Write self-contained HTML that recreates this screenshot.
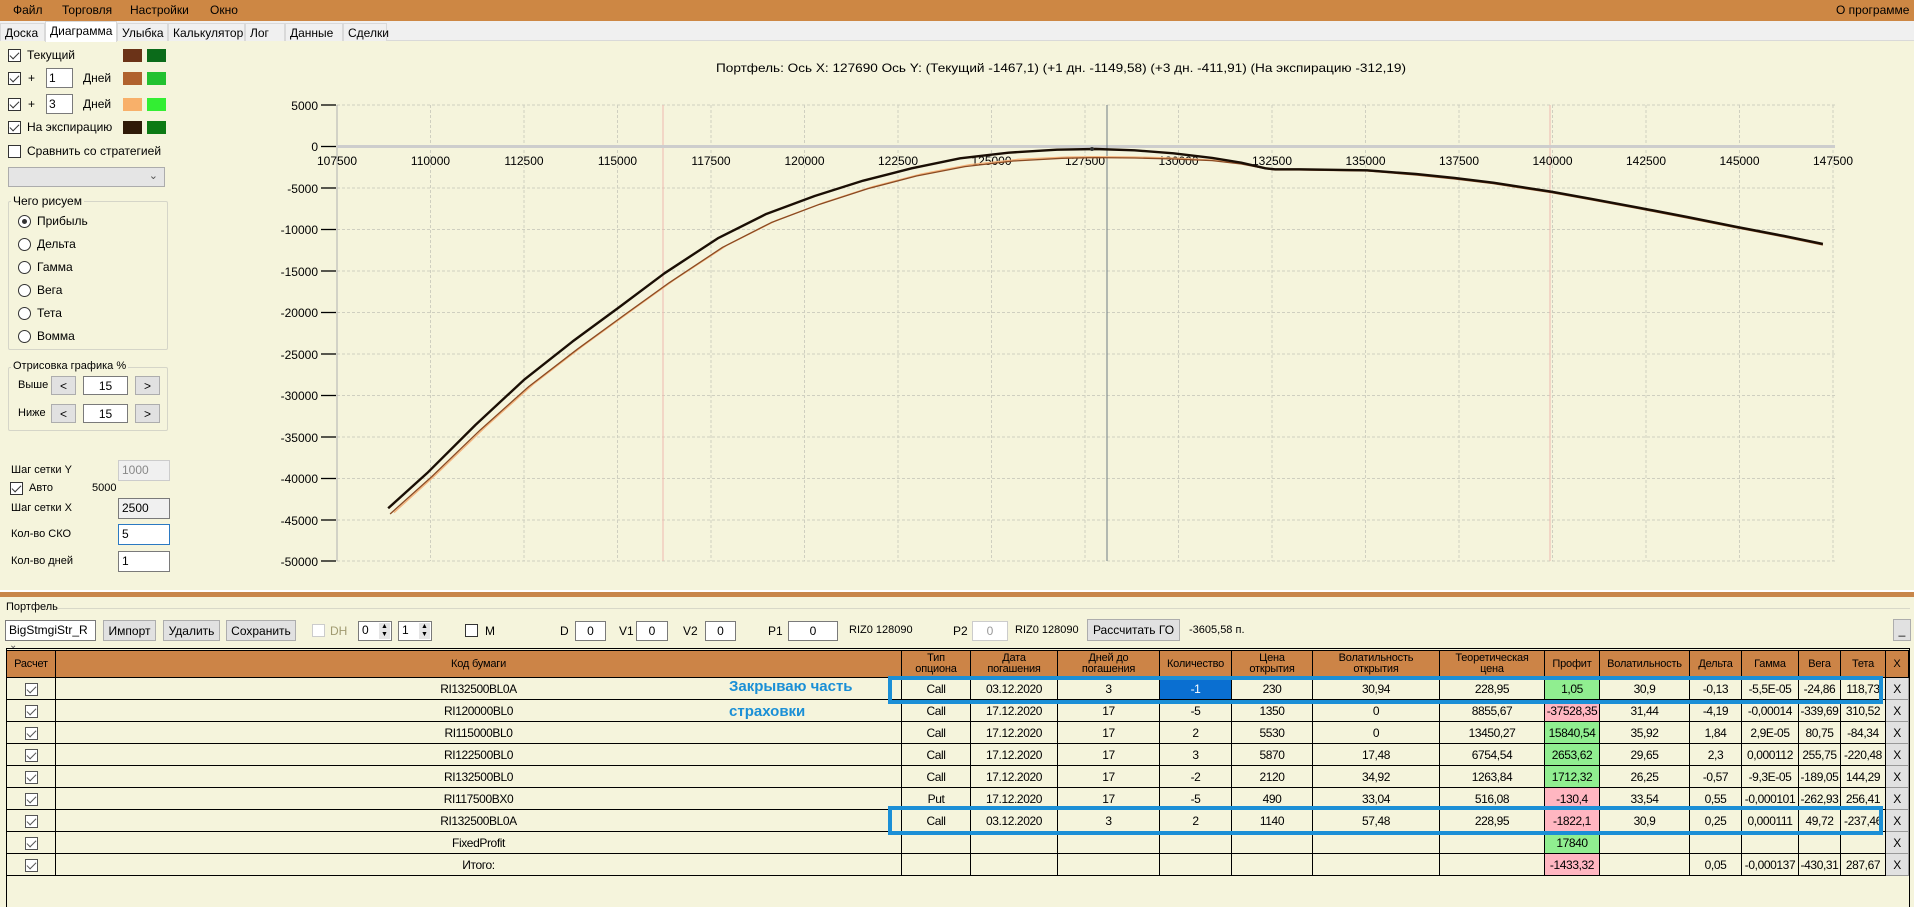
<!DOCTYPE html>
<html><head><meta charset="utf-8"><style>
*{box-sizing:border-box;margin:0;padding:0}
body{width:1914px;height:907px;overflow:hidden;background:#f5f4dc;font-family:"Liberation Sans",sans-serif;font-size:12px;color:#000;position:relative}
.a{position:absolute;white-space:nowrap}
.menu{left:0;top:0;width:1914px;height:21px;background:#cd8744}
.menu span{position:absolute;top:3px;font-size:12px}
.tabs{left:0;top:21px;width:1914px;height:20px;background:#f0f0f0;border-bottom:1px solid #d9d9d9}
.tab{position:absolute;top:2px;height:18px;border:1px solid #d9d9d9;border-bottom:none;font-size:12px;padding:2px 0 0 4px;background:#f0f0f0}
.cb{position:absolute;width:13px;height:13px;border:1px solid #333;background:#fff}
.cb.on::after{content:"";position:absolute;left:3px;top:0px;width:4px;height:8px;border:solid #333;border-width:0 1px 1px 0;transform:rotate(45deg)}
.sw{position:absolute;width:19px;height:13px}
.inp{position:absolute;background:#fff;border:1px solid #7a7a7a;font-size:12px;padding:2px 3px}
.rd{position:absolute;width:13px;height:13px;border:1px solid #333;border-radius:50%;background:#fff}
.gb{position:absolute;border:1px solid #d5d5c8;border-radius:2px}
.btn{position:absolute;background:#e1e1e1;border:1px solid #adadad;font-size:12px;text-align:center;padding-top:3px}
.nar{font-family:"Liberation Sans Narrow","Liberation Sans",sans-serif;font-stretch:condensed}
table{position:absolute;left:6px;top:650px;border-collapse:collapse;table-layout:fixed;font-family:"Liberation Sans Narrow","Liberation Sans",sans-serif;font-stretch:condensed;font-size:12px}
td,th{border:1px solid #000;text-align:center;height:22px;padding:0;overflow:hidden;white-space:nowrap;letter-spacing:-0.4px}
th{background:#cc8447;font-weight:normal;height:27px;line-height:11px;font-size:11px;letter-spacing:-0.2px}
.g{background:#90ee90}.p{background:#ffb6c1}
.x{background:#e1e1e1;border:1px solid #999}
.tc{display:inline-block;width:13px;height:13px;border:1px solid #555;position:relative;vertical-align:middle;background:#fff}
.tc::after{content:"";position:absolute;left:3px;top:0;width:4px;height:8px;border:solid #555;border-width:0 1px 1px 0;transform:rotate(45deg)}
.hl{position:absolute;border:4px solid #1b8fd6}
</style></head><body>
<div class="a menu"><span style="left:13px">Файл</span><span style="left:62px">Торговля</span><span style="left:130px">Настройки</span><span style="left:210px">Окно</span><span style="left:1836px">О программе</span></div>
<div class="a tabs">
<div class="tab" style="left:0;width:45px">Доска</div>
<div class="tab" style="left:45px;width:72px;top:0;height:21px;background:#fff">Диаграмма</div>
<div class="tab" style="left:117px;width:51px">Улыбка</div>
<div class="tab" style="left:168px;width:77px">Калькулятор</div>
<div class="tab" style="left:245px;width:40px">Лог</div>
<div class="tab" style="left:285px;width:58px">Данные</div>
<div class="tab" style="left:343px;width:44px">Сделки</div>
</div>
<!-- left panel -->
<div class="cb on" style="left:8px;top:49px"></div><div class="a" style="left:27px;top:48px">Текущий</div>
<div class="sw" style="left:123px;top:49px;background:#6b3318"></div><div class="sw" style="left:147px;top:49px;background:#0b6b1a"></div>
<div class="cb on" style="left:8px;top:72px"></div><div class="a" style="left:28px;top:71px">+</div>
<div class="inp" style="left:46px;top:68px;width:27px;height:20px;padding:2px">1</div><div class="a" style="left:83px;top:71px">Дней</div>
<div class="sw" style="left:123px;top:72px;background:#b0622e"></div><div class="sw" style="left:147px;top:72px;background:#22c130"></div>
<div class="cb on" style="left:8px;top:98px"></div><div class="a" style="left:28px;top:97px">+</div>
<div class="inp" style="left:46px;top:94px;width:27px;height:20px;padding:2px">3</div><div class="a" style="left:83px;top:97px">Дней</div>
<div class="sw" style="left:123px;top:98px;background:#f8b06a"></div><div class="sw" style="left:147px;top:98px;background:#33ee33"></div>
<div class="cb on" style="left:8px;top:121px"></div><div class="a" style="left:27px;top:120px">На экспирацию</div>
<div class="sw" style="left:123px;top:121px;background:#2f1a08"></div><div class="sw" style="left:147px;top:121px;background:#0c7a14"></div>
<div class="cb" style="left:8px;top:145px"></div><div class="a" style="left:27px;top:144px">Сравнить со стратегией</div>
<div class="a" style="left:8px;top:167px;width:157px;height:20px;background:#e5e5e5;border:1px solid #acacac"><span style="position:absolute;right:6px;top:1px;font-size:11px;color:#555">&#8964;</span></div>
<div class="gb" style="left:8px;top:201px;width:160px;height:149px"></div>
<div class="a" style="left:11px;top:194px;background:#f5f4dc;padding:0 2px">Чего рисуем</div>
<div class="rd" style="left:18px;top:215px"><div style="position:absolute;left:3px;top:3px;width:5px;height:5px;border-radius:50%;background:#333"></div></div><div class="a" style="left:37px;top:214px">Прибыль</div>
<div class="rd" style="left:18px;top:238px"></div><div class="a" style="left:37px;top:237px">Дельта</div>
<div class="rd" style="left:18px;top:261px"></div><div class="a" style="left:37px;top:260px">Гамма</div>
<div class="rd" style="left:18px;top:284px"></div><div class="a" style="left:37px;top:283px">Вега</div>
<div class="rd" style="left:18px;top:307px"></div><div class="a" style="left:37px;top:306px">Тета</div>
<div class="rd" style="left:18px;top:330px"></div><div class="a" style="left:37px;top:329px">Вомма</div>
<div class="gb" style="left:8px;top:367px;width:160px;height:64px"></div>
<div class="a nar" style="left:11px;top:360px;background:#f5f4dc;padding:0 2px;font-size:11px">Отрисовка графика %</div>
<div class="a nar" style="left:18px;top:379px;font-size:11px">Выше</div>
<div class="btn" style="left:51px;top:376px;width:25px;height:19px;padding-top:2px">&lt;</div>
<div class="inp" style="left:83px;top:376px;width:45px;height:19px;text-align:center;padding:2px">15</div>
<div class="btn" style="left:135px;top:376px;width:25px;height:19px;padding-top:2px">&gt;</div>
<div class="a nar" style="left:18px;top:407px;font-size:11px">Ниже</div>
<div class="btn" style="left:51px;top:404px;width:25px;height:19px;padding-top:2px">&lt;</div>
<div class="inp" style="left:83px;top:404px;width:45px;height:19px;text-align:center;padding:2px">15</div>
<div class="btn" style="left:135px;top:404px;width:25px;height:19px;padding-top:2px">&gt;</div>
<div class="a nar" style="left:11px;top:464px;font-size:11px">Шаг сетки Y</div>
<div class="inp nar" style="left:118px;top:460px;width:52px;height:21px;background:#f0f0f0;border-color:#ccc;color:#888">1000</div>
<div class="cb on" style="left:10px;top:482px"></div><div class="a nar" style="left:29px;top:482px;font-size:11px">Авто</div><div class="a nar" style="left:92px;top:482px;font-size:11px">5000</div>
<div class="a nar" style="left:11px;top:502px;font-size:11px">Шаг сетки X</div>
<div class="inp nar" style="left:118px;top:498px;width:52px;height:21px;background:#f0f0f0">2500</div>
<div class="a nar" style="left:11px;top:528px;font-size:11px">Кол-во СКО</div>
<div class="inp nar" style="left:118px;top:524px;width:52px;height:21px;border-color:#2b79c2">5</div>
<div class="a nar" style="left:11px;top:555px;font-size:11px">Кол-во дней</div>
<div class="inp nar" style="left:118px;top:551px;width:52px;height:21px">1</div>
<!-- chart -->
<svg class="a" style="left:0;top:0" width="1914" height="600" viewBox="0 0 1914 600">
<text x="716" y="72" font-family="Liberation Sans" font-size="12" textLength="690" lengthAdjust="spacingAndGlyphs">Портфель: Ось X: 127690 Ось Y:  (Текущий -1467,1)  (+1 дн. -1149,58)  (+3 дн. -411,91)  (На экспирацию -312,19)</text>
<g stroke="#cfcfc0" stroke-dasharray="3,2" stroke-width="1">
<line x1="337" y1="105" x2="1835" y2="105"/><line x1="337" y1="188" x2="1835" y2="188"/><line x1="337" y1="229.5" x2="1835" y2="229.5"/><line x1="337" y1="271" x2="1835" y2="271"/><line x1="337" y1="312.5" x2="1835" y2="312.5"/><line x1="337" y1="354" x2="1835" y2="354"/><line x1="337" y1="395.5" x2="1835" y2="395.5"/><line x1="337" y1="437" x2="1835" y2="437"/><line x1="337" y1="478.5" x2="1835" y2="478.5"/><line x1="337" y1="520" x2="1835" y2="520"/><line x1="337" y1="561" x2="1835" y2="561"/>
<line x1="430.5" y1="105" x2="430.5" y2="561"/><line x1="524" y1="105" x2="524" y2="561"/><line x1="617.5" y1="105" x2="617.5" y2="561"/><line x1="711" y1="105" x2="711" y2="561"/><line x1="804.5" y1="105" x2="804.5" y2="561"/><line x1="898" y1="105" x2="898" y2="561"/><line x1="991.5" y1="105" x2="991.5" y2="561"/><line x1="1085" y1="105" x2="1085" y2="561"/><line x1="1178.5" y1="105" x2="1178.5" y2="561"/><line x1="1272" y1="105" x2="1272" y2="561"/><line x1="1365.5" y1="105" x2="1365.5" y2="561"/><line x1="1459" y1="105" x2="1459" y2="561"/><line x1="1552.5" y1="105" x2="1552.5" y2="561"/><line x1="1646" y1="105" x2="1646" y2="561"/><line x1="1739.5" y1="105" x2="1739.5" y2="561"/><line x1="1833" y1="105" x2="1833" y2="561"/>
</g>
<line x1="663" y1="105" x2="663" y2="561" stroke="#f0b8b0"/><line x1="1550" y1="105" x2="1550" y2="561" stroke="#f0b8b0"/>
<line x1="337" y1="105" x2="337" y2="561" stroke="#b0b0b0"/>
<line x1="337" y1="146.5" x2="1835" y2="146.5" stroke="#cdcdcd" stroke-width="3"/>
<line x1="1107" y1="105" x2="1107" y2="561" stroke="#6e7b85"/>
<g font-family="Liberation Sans" font-size="12" text-anchor="end">
<text x="318" y="110">5000</text><text x="318" y="151">0</text><text x="318" y="193">-5000</text><text x="318" y="234">-10000</text><text x="318" y="276">-15000</text><text x="318" y="317">-20000</text><text x="318" y="359">-25000</text><text x="318" y="400">-30000</text><text x="318" y="442">-35000</text><text x="318" y="483">-40000</text><text x="318" y="525">-45000</text><text x="318" y="566">-50000</text>
</g>
<g stroke="#000" stroke-width="1.3"><line x1="321" y1="105" x2="336" y2="105"/><line x1="321" y1="146.5" x2="336" y2="146.5"/><line x1="321" y1="188" x2="336" y2="188"/><line x1="321" y1="229.5" x2="336" y2="229.5"/><line x1="321" y1="271" x2="336" y2="271"/><line x1="321" y1="312.5" x2="336" y2="312.5"/><line x1="321" y1="354" x2="336" y2="354"/><line x1="321" y1="395.5" x2="336" y2="395.5"/><line x1="321" y1="437" x2="336" y2="437"/><line x1="321" y1="478.5" x2="336" y2="478.5"/><line x1="321" y1="520" x2="336" y2="520"/><line x1="321" y1="561" x2="336" y2="561"/></g>
<g font-family="Liberation Sans" font-size="12" text-anchor="middle">
<text x="337" y="165">107500</text><text x="430.5" y="165">110000</text><text x="524" y="165">112500</text><text x="617.5" y="165">115000</text><text x="711" y="165">117500</text><text x="804.5" y="165">120000</text><text x="898" y="165">122500</text><text x="991.5" y="165">125000</text><text x="1085" y="165">127500</text><text x="1178.5" y="165">130000</text><text x="1272" y="165">132500</text><text x="1365.5" y="165">135000</text><text x="1459" y="165">137500</text><text x="1552.5" y="165">140000</text><text x="1646" y="165">142500</text><text x="1739.5" y="165">145000</text><text x="1833" y="165">147500</text>
</g>
<g transform="translate(330,90) scale(0.9694,0.3333)" fill="none" stroke-linejoin="round">
<polyline vector-effect="non-scaling-stroke" stroke="#f3b27a" stroke-width="1.3" points="66,1268 110,1152 160,1012 210,882 260,770 310,664 355,570 410,465 460,392 510,337 560,290 610,252 660,224 710,208 760,201 790,200 830,201 870,204 910,210 940,220 965,235 975,239 1000,239 1070,242 1120,254 1160,266 1200,280 1260,307 1300,328 1350,355 1400,383 1450,412 1500,440 1540,464"/>
<polyline vector-effect="non-scaling-stroke" stroke="#8a4a22" stroke-width="1.3" points="62,1272 105,1160 155,1020 205,890 255,778 305,672 350,578 405,472 455,398 505,343 555,296 605,258 655,230 705,213 755,205 790,203 830,204 870,207 910,212 940,222 965,236 975,240 1000,240 1070,243 1120,255 1160,267 1200,281 1260,308 1300,329 1350,356 1400,384 1450,413 1500,441 1540,465"/>
<polyline vector-effect="non-scaling-stroke" stroke="#1a0e04" stroke-width="2.4" points="60,1255 100,1150 150,1005 200,870 250,755 300,648 345,550 400,445 450,372 500,318 550,272 600,235 650,205 700,188 750,179 790,177 830,181 870,190 910,204 940,218 965,235 975,238 1000,238 1070,241 1120,252 1160,264 1200,278 1260,305 1300,326 1350,353 1400,381 1450,410 1500,438 1540,462"/>
</g>
<circle cx="1092" cy="149" r="2" fill="#333"/>
<rect x="0" y="590" width="1914" height="2" fill="#fff"/>
<rect x="0" y="592" width="1914" height="5" fill="#c8864a"/>
</svg>
<!-- portfolio toolbar -->
<div class="a nar" style="left:6px;top:601px;font-size:11px">Портфель</div>
<div class="a" style="left:58px;top:608px;width:1852px;height:1px;background:#d8d8c8"></div>
<div class="inp nar" style="left:5px;top:620px;width:91px;height:21px;font-size:12px">BigStmgiStr_R <span style="font-size:10px;color:#555">&#8964;</span></div>
<div class="btn nar" style="left:103px;top:620px;width:53px;height:21px">Импорт</div>
<div class="btn nar" style="left:163px;top:620px;width:57px;height:21px">Удалить</div>
<div class="btn nar" style="left:226px;top:620px;width:70px;height:21px">Сохранить</div>
<div class="cb" style="left:312px;top:624px;border-color:#ccc"></div><div class="a nar" style="left:330px;top:624px;color:#a09a70">DH</div>
<div class="inp nar" style="left:358px;top:621px;width:34px;height:20px;padding:1px 3px">0<span style="position:absolute;right:1px;top:1px;width:11px;height:16px;background:#e5e5e5;font-size:7px;line-height:8px;text-align:center">▲<br>▼</span></div>
<div class="inp nar" style="left:398px;top:621px;width:34px;height:20px;padding:1px 3px">1<span style="position:absolute;right:1px;top:1px;width:11px;height:16px;background:#e5e5e5;font-size:7px;line-height:8px;text-align:center">▲<br>▼</span></div>
<div class="cb" style="left:465px;top:624px"></div><div class="a nar" style="left:485px;top:624px">M</div>
<div class="a nar" style="left:560px;top:624px">D</div><div class="inp nar" style="left:575px;top:621px;width:31px;height:20px;text-align:center">0</div>
<div class="a nar" style="left:619px;top:624px">V1</div><div class="inp nar" style="left:636px;top:621px;width:32px;height:20px;text-align:center">0</div>
<div class="a nar" style="left:683px;top:624px">V2</div><div class="inp nar" style="left:705px;top:621px;width:31px;height:20px;text-align:center">0</div>
<div class="a nar" style="left:768px;top:624px">P1</div><div class="inp nar" style="left:788px;top:621px;width:50px;height:20px;text-align:center">0</div>
<div class="a nar" style="left:849px;top:624px;font-size:11px">RIZ0 128090</div>
<div class="a nar" style="left:953px;top:624px">P2</div><div class="inp nar" style="left:972px;top:621px;width:36px;height:20px;text-align:center;border-color:#ccc;color:#999">0</div>
<div class="a nar" style="left:1015px;top:624px;font-size:11px">RIZ0 128090</div>
<div class="btn nar" style="left:1087px;top:619px;width:93px;height:22px">Рассчитать ГО</div>
<div class="a nar" style="left:1189px;top:624px;font-size:11px">-3605,58 п.</div>
<div class="btn" style="left:1893px;top:619px;width:18px;height:22px">_</div>
<!-- table area -->
<div class="a" style="left:6px;top:648px;width:1904px;height:259px;border:1px solid #000;border-bottom:none"></div>
<table>
<colgroup><col style="width:49px"><col style="width:846px"><col style="width:69px"><col style="width:87px"><col style="width:102px"><col style="width:72px"><col style="width:81px"><col style="width:127px"><col style="width:105px"><col style="width:55px"><col style="width:90px"><col style="width:52px"><col style="width:57px"><col style="width:42px"><col style="width:45px"><col style="width:23px"></colgroup>
<tr><th>Расчет</th><th>Код бумаги</th><th>Тип<br>опциона</th><th>Дата<br>погашения</th><th>Дней до<br>погашения</th><th>Количество</th><th>Цена<br>открытия</th><th>Волатильность<br>открытия</th><th>Теоретическая<br>цена</th><th>Профит</th><th>Волатильность</th><th>Дельта</th><th>Гамма</th><th>Вега</th><th>Тета</th><th>X</th></tr>
<tr><td><span class="tc"></span></td><td>RI132500BL0A</td><td>Call</td><td>03.12.2020</td><td>3</td><td style="background:#0a6fd1;color:#fff">-1</td><td>230</td><td>30,94</td><td>228,95</td><td class="g">1,05</td><td>30,9</td><td>-0,13</td><td>-5,5E-05</td><td>-24,86</td><td>118,73</td><td class="x">X</td></tr>
<tr><td><span class="tc"></span></td><td>RI120000BL0</td><td>Call</td><td>17.12.2020</td><td>17</td><td>-5</td><td>1350</td><td>0</td><td>8855,67</td><td class="p">-37528,35</td><td>31,44</td><td>-4,19</td><td>-0,00014</td><td>-339,69</td><td>310,52</td><td class="x">X</td></tr>
<tr><td><span class="tc"></span></td><td>RI115000BL0</td><td>Call</td><td>17.12.2020</td><td>17</td><td>2</td><td>5530</td><td>0</td><td>13450,27</td><td class="g">15840,54</td><td>35,92</td><td>1,84</td><td>2,9E-05</td><td>80,75</td><td>-84,34</td><td class="x">X</td></tr>
<tr><td><span class="tc"></span></td><td>RI122500BL0</td><td>Call</td><td>17.12.2020</td><td>17</td><td>3</td><td>5870</td><td>17,48</td><td>6754,54</td><td class="g">2653,62</td><td>29,65</td><td>2,3</td><td>0,000112</td><td>255,75</td><td>-220,48</td><td class="x">X</td></tr>
<tr><td><span class="tc"></span></td><td>RI132500BL0</td><td>Call</td><td>17.12.2020</td><td>17</td><td>-2</td><td>2120</td><td>34,92</td><td>1263,84</td><td class="g">1712,32</td><td>26,25</td><td>-0,57</td><td>-9,3E-05</td><td>-189,05</td><td>144,29</td><td class="x">X</td></tr>
<tr><td><span class="tc"></span></td><td>RI117500BX0</td><td>Put</td><td>17.12.2020</td><td>17</td><td>-5</td><td>490</td><td>33,04</td><td>516,08</td><td class="p">-130,4</td><td>33,54</td><td>0,55</td><td>-0,000101</td><td>-262,93</td><td>256,41</td><td class="x">X</td></tr>
<tr><td><span class="tc"></span></td><td>RI132500BL0A</td><td>Call</td><td>03.12.2020</td><td>3</td><td>2</td><td>1140</td><td>57,48</td><td>228,95</td><td class="p">-1822,1</td><td>30,9</td><td>0,25</td><td>0,000111</td><td>49,72</td><td>-237,46</td><td class="x">X</td></tr>
<tr><td><span class="tc"></span></td><td>FixedProfit</td><td></td><td></td><td></td><td></td><td></td><td></td><td></td><td class="g">17840</td><td></td><td></td><td></td><td></td><td></td><td class="x">X</td></tr>
<tr><td><span class="tc"></span></td><td>Итого:</td><td></td><td></td><td></td><td></td><td></td><td></td><td></td><td class="p">-1433,32</td><td></td><td>0,05</td><td>-0,000137</td><td>-430,31</td><td>287,67</td><td class="x">X</td></tr>
</table>
<div class="hl" style="left:888px;top:676px;width:995px;height:28px"></div>
<div class="hl" style="left:888px;top:806px;width:995px;height:29px"></div>
<div class="a" style="left:729px;top:678px;color:#1a8fd6;font-weight:bold;font-size:15px">Закрываю часть</div>
<div class="a" style="left:729px;top:703px;color:#1a8fd6;font-weight:bold;font-size:15px">страховки</div>
</body></html>
